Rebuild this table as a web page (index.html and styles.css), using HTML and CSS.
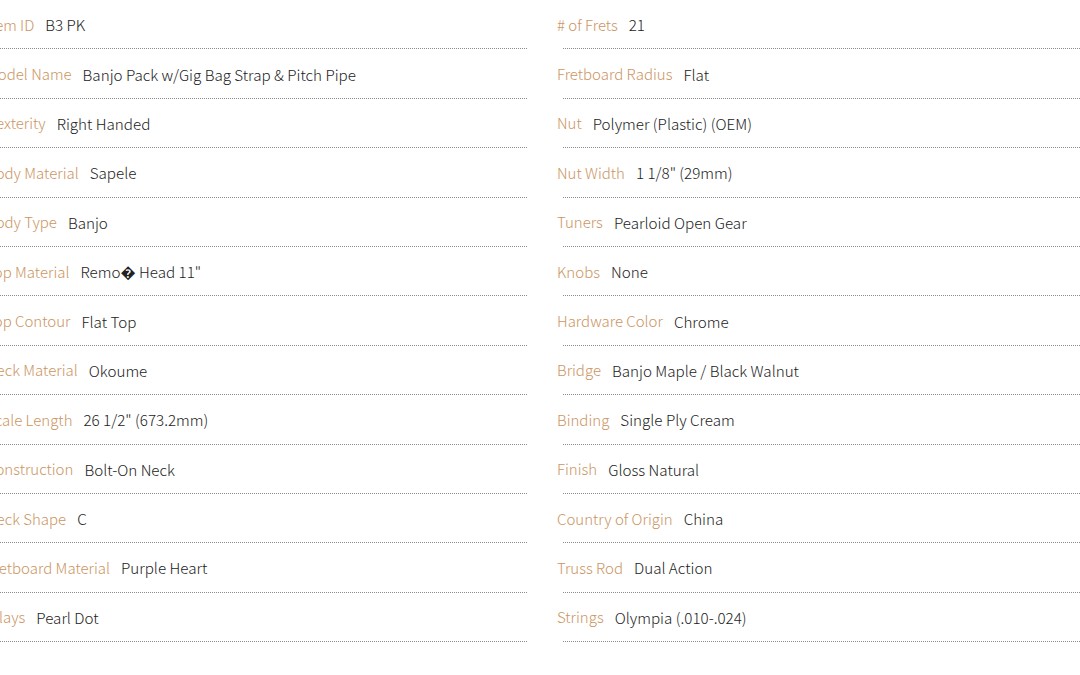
FILE: index.html
```html
<!DOCTYPE html>
<html lang="en">
<head>
<meta charset="utf-8">
<title>Specifications</title>
<link rel="stylesheet" href="styles.css">
</head>
<body>
<div class="specs">
  <ul class="col col-left">
    <li class="row"><span class="label">Item ID</span><span class="value">B3 PK</span></li>
    <li class="row"><span class="label">Model Name</span><span class="value">Banjo Pack w/Gig Bag Strap &amp; Pitch Pipe</span></li>
    <li class="row"><span class="label">Dexterity</span><span class="value">Right Handed</span></li>
    <li class="row"><span class="label">Body Material</span><span class="value">Sapele</span></li>
    <li class="row"><span class="label">Body Type</span><span class="value">Banjo</span></li>
    <li class="row"><span class="label">Top Material</span><span class="value">Remo&#xFFFD; Head 11"</span></li>
    <li class="row"><span class="label">Top Contour</span><span class="value">Flat Top</span></li>
    <li class="row"><span class="label">Neck Material</span><span class="value">Okoume</span></li>
    <li class="row"><span class="label">Scale Length</span><span class="value">26 1/2" (673.2mm)</span></li>
    <li class="row"><span class="label">Construction</span><span class="value">Bolt-On Neck</span></li>
    <li class="row"><span class="label">Neck Shape</span><span class="value">C</span></li>
    <li class="row"><span class="label">Fretboard Material</span><span class="value">Purple Heart</span></li>
    <li class="row"><span class="label">Inlays</span><span class="value">Pearl Dot</span></li>
  </ul>
  <ul class="col col-right">
    <li class="row"><span class="label"># of Frets</span><span class="value">21</span></li>
    <li class="row"><span class="label">Fretboard Radius</span><span class="value">Flat</span></li>
    <li class="row"><span class="label">Nut</span><span class="value">Polymer (Plastic) (OEM)</span></li>
    <li class="row"><span class="label">Nut Width</span><span class="value">1 1/8" (29mm)</span></li>
    <li class="row"><span class="label">Tuners</span><span class="value">Pearloid Open Gear</span></li>
    <li class="row"><span class="label">Knobs</span><span class="value">None</span></li>
    <li class="row"><span class="label">Hardware Color</span><span class="value">Chrome</span></li>
    <li class="row"><span class="label">Bridge</span><span class="value">Banjo Maple / Black Walnut</span></li>
    <li class="row"><span class="label">Binding</span><span class="value">Single Ply Cream</span></li>
    <li class="row"><span class="label">Finish</span><span class="value">Gloss Natural</span></li>
    <li class="row"><span class="label">Country of Origin</span><span class="value">China</span></li>
    <li class="row"><span class="label">Truss Rod</span><span class="value">Dual Action</span></li>
    <li class="row"><span class="label">Strings</span><span class="value">Olympia (.010-.024)</span></li>
  </ul>
</div>
</body>
</html>
```

FILE: styles.css
```css
html, body {
  margin: 0;
  padding: 0;
  background: #fff;
  overflow: hidden;
}
body {
  font-family: "Noto Sans CJK KR", "Noto Sans", sans-serif;
  font-size: 15px;
  font-weight: 300;
  color: #333;
}
.specs {
  display: grid;
  grid-template-columns: 531px 531px;
  column-gap: 36px;
  margin-left: -4px;
  width: 1098px;
}
.col {
  list-style: none;
  margin: 0;
  padding: 0;
}
.row {
  height: 48.4px;
  border-bottom: 1px dotted #8a8a8a;
  display: flex;
  align-items: center;
  gap: 11px;
  white-space: nowrap;
}
.label {
  margin-left: -6px;
  color: #cb9563;
}
.col-left .label {
  margin-left: -10px;
}
.value {
  color: #222;
  font-size: 15.2px;
}
```
